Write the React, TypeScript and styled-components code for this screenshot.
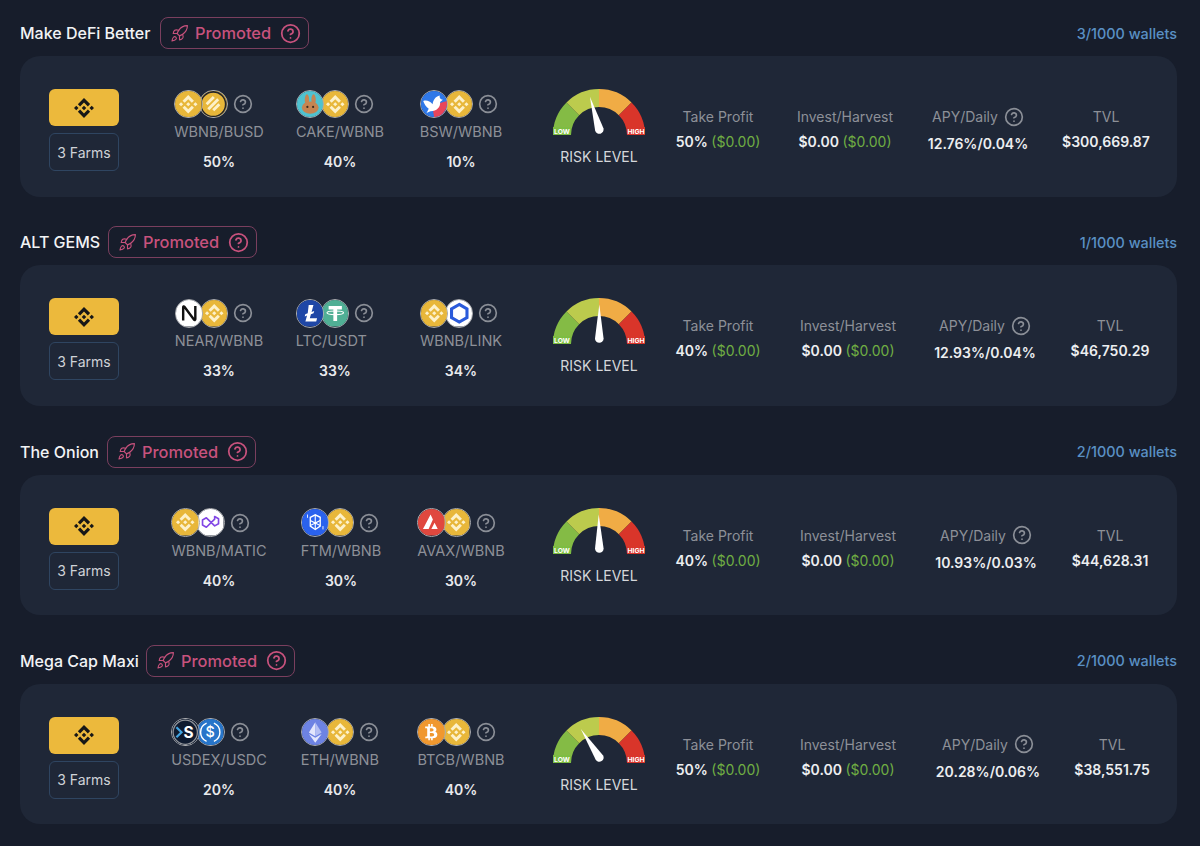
import React from 'react';
import styled, { createGlobalStyle } from 'styled-components';
import { CircleHelp, Rocket } from 'lucide-react';
import { SiBinance } from 'react-icons/si';
import { FaBtc } from 'react-icons/fa';

const GlobalStyle = createGlobalStyle`
  html, body {
    margin: 0;
    padding: 0;
    background: #171d2b;
  }
  body {
    font-family: 'Inter', 'Liberation Sans', sans-serif;
    color: #fff;
  }
`;

const Page = styled.div`
  width: 1200px;
  height: 846px;
  overflow: hidden;
  box-sizing: border-box;
  padding: 17px 23px 0 20px;
  display: flex;
  flex-direction: column;
  gap: 29.83px;
`;

const Group = styled.section`
  display: flex;
  flex-direction: column;
  gap: 7px;
`;

const GroupHeader = styled.header`
  display: flex;
  align-items: center;
  height: 32px;
`;

const GroupTitle = styled.h3<{ $width: number }>`
  width: ${(p) => p.$width}px;
  margin: 0 9px 0 0;
  font-size: 16px;
  font-weight: 500;
  white-space: nowrap;
  color: #f2f3f5;
`;

const PromotedBadge = styled.div`
  display: flex;
  align-items: center;
  box-sizing: border-box;
  height: 32px;
  width: 149px;
  padding-left: 9px;
  border: 1px solid #7a3f5e;
  border-radius: 8px;
  color: #c8527d;
  font-size: 16.4px;
  font-weight: 500;
  span {
    margin: 0 9px 0 6px;
  }
`;

const Wallets = styled.div`
  margin-left: auto;
  font-size: 14.4px;
  font-weight: 500;
  color: #5a90c4;
`;

const Card = styled.div`
  display: flex;
  align-items: flex-start;
  box-sizing: border-box;
  height: 140.5px;
  padding: 33px 0 0 29px;
  border-radius: 20px;
  background: #1f2737;
`;

const ChainColumn = styled.div`
  display: flex;
  flex-direction: column;
  gap: 7px;
  width: 70px;
  margin-right: 39.5px;
`;

const ChainButton = styled.div`
  display: flex;
  align-items: center;
  justify-content: center;
  height: 37px;
  border-radius: 6px;
  background: #ecb93c;
  color: #171717;
  font-size: 20px;
`;

const FarmsButton = styled.div`
  display: flex;
  align-items: center;
  justify-content: center;
  box-sizing: border-box;
  height: 38px;
  border: 1px solid #2f4561;
  border-radius: 6px;
  font-size: 14px;
  color: #cfd2d7;
`;

const Pairs = styled.div<{ $columns: string }>`
  display: grid;
  grid-template-columns: ${(p) => p.$columns};
  justify-items: center;
  width: 363px;
  margin-right: 31.5px;
`;

const Pair = styled.div`
  display: flex;
  flex-direction: column;
  width: fit-content;
`;

const CoinRow = styled.div`
  display: flex;
  align-items: center;
  height: 30px;
`;

const Coin = styled.div<{ $first?: boolean }>`
  position: relative;
  box-sizing: border-box;
  width: 28.5px;
  height: 28.5px;
  overflow: hidden;
  border: 1px solid #a9abaf;
  border-radius: 50%;
  margin-left: ${(p) => (p.$first ? 0 : '-3.5px')};
  z-index: ${(p) => (p.$first ? 2 : 1)};
  svg {
    display: block;
    width: 100%;
    height: 100%;
  }
`;

const HelpIcon = styled(CircleHelp)<{ $left?: number }>`
  flex: none;
  margin-left: ${(p) => p.$left ?? 5}px;
  color: #8b8f97;
`;

const PairName = styled.div`
  margin-top: 2px;
  font-size: 14.5px;
  line-height: 22px;
  white-space: nowrap;
  color: #8d9098;
`;

const PairShare = styled.div`
  margin-top: 8px;
  text-align: center;
  font-size: 14px;
  font-weight: 600;
  line-height: 22px;
  color: #e9eaec;
`;

const RiskColumn = styled.div`
  display: flex;
  flex-direction: column;
  align-items: center;
  width: 92px;
  svg {
    display: block;
  }
`;

const RiskLabel = styled.div`
  margin-top: 12px;
  font-size: 14px;
  line-height: 20px;
  white-space: nowrap;
  color: #d5d7db;
`;

const Stats = styled.div<{ $columns: string }>`
  display: grid;
  grid-template-columns: ${(p) => p.$columns};
  padding-top: 17px;
`;

const Stat = styled.div`
  display: flex;
  flex-direction: column;
  align-items: center;
  gap: 3px;
`;

const StatLabel = styled.div`
  display: flex;
  align-items: center;
  height: 21px;
  font-size: 14px;
  white-space: nowrap;
  color: #8d9098;
`;

const StatValue = styled.div<{ $drop?: boolean }>`
  margin-top: ${(p) => (p.$drop ? 3 : 1)}px;
  font-size: 14px;
  font-weight: 600;
  line-height: 22px;
  white-space: nowrap;
  color: #eceef0;
`;

const Gain = styled.span`
  font-weight: 400;
  color: #6fae43;
`;

const Art = ({ bg, children }: { bg: string; children?: React.ReactNode }) => (
  <svg viewBox="0 0 24 24">
    <rect width="24" height="24" fill={bg} />
    {children}
  </svg>
);

const bnbPath =
  'M16.624 13.92l2.717 2.716-7.353 7.353-7.353-7.352 2.717-2.717 4.636 4.66 4.636-4.66zm4.637-4.636L24 12l-2.715 2.716L18.568 12l2.693-2.716zm-9.272 0l2.716 2.692-2.716 2.717L9.272 12l2.717-2.715zm-9.273 0L5.409 12l-2.692 2.692L0 12l2.716-2.716zM11.989.012l7.353 7.329-2.718 2.715-4.635-4.635-4.636 4.66-2.717-2.716L11.989.012z';

const coins: Record<string, React.ReactNode> = {
  WBNB: (
    <Art bg="#e8b73a">
      <path transform="translate(3.6 3.6) scale(.7)" fill="#fdf1c9" d={bnbPath} />
    </Art>
  ),
  BUSD: (
    <Art bg="#e8b73a">
      <circle cx="12" cy="12" r="11.2" fill="none" stroke="#23252b" strokeWidth="1.4" />
      <path d="M6 12l6.5-6.5M7.5 16.5l9-9M12 17.5l5.5-5.5" stroke="#fdf1c9" strokeWidth="2.6" />
    </Art>
  ),
  CAKE: (
    <Art bg="#4fc2d0">
      <ellipse cx="9" cy="8" rx="2" ry="5" fill="#c58552" />
      <ellipse cx="15" cy="8" rx="2" ry="5" fill="#c58552" />
      <ellipse cx="12" cy="15" rx="7.6" ry="5.6" fill="#c58552" />
      <circle cx="9.4" cy="14.4" r="1" fill="#3a2a20" />
      <circle cx="14.6" cy="14.4" r="1" fill="#3a2a20" />
    </Art>
  ),
  BSW: (
    <Art bg="#2f78e8">
      <path d="M12 24C18 24 24 18 24 9L10 13z" fill="#e8455a" />
      <path d="M2 9c3-1 6 0 8.5 3C11 8 13 5 17 4c-.5 2 .3 3.5 2.8 4l-2.5 2c.5 5-3.5 8.5-8.8 8.3L5 20l2-4C4.7 14.5 3 12 2 9z" fill="#fff" />
    </Art>
  ),
  NEAR: (
    <Art bg="#ffffff">
      <path d="M6.5 18.5V6.500c0-.6.7-.9 1.1-.4l8.800 11.800c.4.5 1.1.2 1.1-.4V5.500" fill="none" stroke="#111" strokeWidth="2.2" />
    </Art>
  ),
  LTC: (
    <Art bg="#1f47a6">
      <path d="M10.6 4.5h4.3l-1.7 6.3 2.4-.9-.6 2.1-2.4.9-1 3.6h6.6l-.8 3H7.6l1.5-5.4-2.1.8.5-2 2.2-.8z" fill="#fff" />
    </Art>
  ),
  USDT: (
    <Art bg="#50af95">
      <path d="M6 5.5h12v3.2h-4.3V19h-3.4V8.700H6z" fill="#fff" />
      <ellipse cx="12" cy="11.6" rx="7.5" ry="1.7" fill="none" stroke="#fff" strokeWidth="1" />
    </Art>
  ),
  LINK: (
    <Art bg="#ffffff">
      <path d="M12 4l7 4v8l-7 4-7-4V8z" fill="none" stroke="#2a5ada" strokeWidth="2.8" />
    </Art>
  ),
  MATIC: (
    <Art bg="#ffffff">
      <path
        d="M16 9.2l-7.500 7.300-3.500-2v-4.500l3.500-2 7.500 7.300 3.500-2v-4.500l-3.500-2z"
        fill="none"
        stroke="#8247e5"
        strokeWidth="1.5"
        strokeLinejoin="round"
      />
    </Art>
  ),
  FTM: (
    <Art bg="#2a62ee">
      <path d="M7.5 7.5l4.500-2.200 4.500 2.200v8l-4.500 3-4.500-3z" fill="none" stroke="#fff" strokeWidth="1.2" />
      <path d="M7.5 10.5l4.500 2.200 4.500-2.200M12 5.500v12.500M7.500 15l4.500-2.300 4.500 2.300" fill="none" stroke="#fff" strokeWidth="1" />
      <path d="M5 5v3M19 15.5v3" stroke="#fff" strokeWidth=".8" />
    </Art>
  ),
  AVAX: (
    <Art bg="#e0483f">
      <path d="M11.4 5L4.500 18h5.100l3.900-8.500zM15 12.500l-2.900 5.500h5.800z" fill="#fff" />
    </Art>
  ),
  USDEX: (
    <Art bg="#0f1b30">
      <circle cx="12" cy="12" r="11" fill="none" stroke="#8f9298" strokeWidth="1.2" />
      <path d="M4 7.5l4.600 4.500L4 16.500" fill="none" stroke="#41a3e0" strokeWidth="2" />
      <text x="15" y="17" textAnchor="middle" fontSize="14" fontWeight="700" fill="#fff" fontFamily="Inter, sans-serif">
        S
      </text>
    </Art>
  ),
  USDC: (
    <Art bg="#2775ca">
      <path d="M8.7 3.8a8.900 8.900 0 000 16.400M15.300 3.800a8.900 8.900 0 010 16.400" fill="none" stroke="#fff" strokeWidth="1.3" />
      <text x="12" y="16.6" textAnchor="middle" fontSize="13" fontWeight="500" fill="#fff" fontFamily="Inter, sans-serif">
        $
      </text>
    </Art>
  ),
  ETH: (
    <Art bg="#6d83e3">
      <path d="M12 3l-5.800 9.300L12 15.700z" fill="#e3e7fc" />
      <path d="M12 3l5.800 9.300L12 15.700z" fill="#b5c0f4" />
      <path d="M6.2 13.6L12 21.500l5.800-7.900L12 17z" fill="#e3e7fc" />
    </Art>
  ),
  BTCB: (
    <Art bg="#f0982f">
      <g transform="translate(4.5 4.5) scale(.625)" color="#fff">
        <FaBtc size={24} />
      </g>
    </Art>
  ),
};

const Gauge = ({ angle }: { angle: number }) => (
  <svg width="92" height="46" viewBox="0 0 92 46">
    <path d="M0 46A46 46 0 0 1 13.47 13.47L26.2 26.2A28 28 0 0 0 18 46z" fill="#84bb45" />
    <path d="M13.47 13.47A46 46 0 0 1 46 0V18A28 28 0 0 0 26.2 26.2z" fill="#bccb4d" />
    <path d="M46 0A46 46 0 0 1 78.53 13.47L65.8 26.2A28 28 0 0 0 46 18z" fill="#f0ac45" />
    <path d="M78.53 13.47A46 46 0 0 1 92 46H74A28 28 0 0 0 65.8 26.2z" fill="#d9352a" />
    <rect x="0" y="38" width="18" height="8" fill="#7dbd42" />
    <rect x="74" y="38" width="18" height="8" fill="#d9352a" />
    <text x="9" y="44.7" textAnchor="middle" fontSize="6.8" fontWeight="700" fill="#fff" fontFamily="Inter, sans-serif">
      LOW
    </text>
    <text x="83" y="44.7" textAnchor="middle" fontSize="6.8" fontWeight="700" fill="#fff" fontFamily="Inter, sans-serif">
      HIGH
    </text>
    <path
      transform={`translate(46.3 40.5) rotate(${angle})`}
      d="M0 -34L-4.3 0A4.3 4.3 0 1 0 4.3 0Z"
      fill="#fff"
    />
  </svg>
);

type PairData = { a: string; b: string; share: string };

type Strategy = {
  title: string;
  titleWidth: number;
  wallets: string;
  pairColumns: string;
  statColumns: string;
  pairs: PairData[];
  angle: number;
  profit: string;
  apy: string;
  tvl: string;
};

const strategies: Strategy[] = [
  {
    title: 'Make DeFi Better',
    titleWidth: 131,
    wallets: '3/1000 wallets',
    pairColumns: '121px 121px 121px',
    statColumns: '146px 108px 158px 98px',
    pairs: [
      { a: 'WBNB', b: 'BUSD', share: '50%' },
      { a: 'CAKE', b: 'WBNB', share: '40%' },
      { a: 'BSW', b: 'WBNB', share: '10%' },
    ],
    angle: -16,
    profit: '50%',
    apy: '12.76%/0.04%',
    tvl: '$300,669.87',
  },
  {
    title: 'ALT GEMS',
    titleWidth: 79,
    wallets: '1/1000 wallets',
    pairColumns: '121px 111px 141px',
    statColumns: '146px 114px 160px 90px',
    pairs: [
      { a: 'NEAR', b: 'WBNB', share: '33%' },
      { a: 'LTC', b: 'USDT', share: '33%' },
      { a: 'WBNB', b: 'LINK', share: '34%' },
    ],
    angle: 0,
    profit: '40%',
    apy: '12.93%/0.04%',
    tvl: '$46,750.29',
  },
  {
    title: 'The Onion',
    titleWidth: 78,
    wallets: '2/1000 wallets',
    pairColumns: '121px 123px 117px',
    statColumns: '146px 114px 162px 86px',
    pairs: [
      { a: 'WBNB', b: 'MATIC', share: '40%' },
      { a: 'FTM', b: 'WBNB', share: '30%' },
      { a: 'AVAX', b: 'WBNB', share: '30%' },
    ],
    angle: -1,
    profit: '40%',
    apy: '10.93%/0.03%',
    tvl: '$44,628.31',
  },
  {
    title: 'Mega Cap Maxi',
    titleWidth: 117,
    wallets: '2/1000 wallets',
    pairColumns: '121px 121px 121px',
    statColumns: '146px 114px 166px 82px',
    pairs: [
      { a: 'USDEX', b: 'USDC', share: '20%' },
      { a: 'ETH', b: 'WBNB', share: '40%' },
      { a: 'BTCB', b: 'WBNB', share: '40%' },
    ],
    angle: -33,
    profit: '50%',
    apy: '20.28%/0.06%',
    tvl: '$38,551.75',
  },
];

const App = () => (
  <>
    <GlobalStyle />
    <Page>
      {strategies.map((item) => (
        <Group key={item.title}>
          <GroupHeader>
            <GroupTitle $width={item.titleWidth}>{item.title}</GroupTitle>
            <PromotedBadge>
              <Rocket size={19} strokeWidth={1.4} />
              <span>Promoted</span>
              <CircleHelp size={21} strokeWidth={2} />
            </PromotedBadge>
            <Wallets>{item.wallets}</Wallets>
          </GroupHeader>
          <Card>
            <ChainColumn>
              <ChainButton>
                <SiBinance />
              </ChainButton>
              <FarmsButton>3 Farms</FarmsButton>
            </ChainColumn>
            <Pairs $columns={item.pairColumns}>
              {item.pairs.map((pair) => (
                <Pair key={pair.a + pair.b}>
                  <CoinRow>
                    <Coin $first>{coins[pair.a]}</Coin>
                    <Coin>{coins[pair.b]}</Coin>
                    <HelpIcon size={20} />
                  </CoinRow>
                  <PairName>
                    {pair.a}/{pair.b}
                  </PairName>
                  <PairShare>{pair.share}</PairShare>
                </Pair>
              ))}
            </Pairs>
            <RiskColumn>
              <Gauge angle={item.angle} />
              <RiskLabel>RISK LEVEL</RiskLabel>
            </RiskColumn>
            <Stats $columns={item.statColumns}>
              <Stat>
                <StatLabel>Take Profit</StatLabel>
                <StatValue>
                  {item.profit} <Gain>($0.00)</Gain>
                </StatValue>
              </Stat>
              <Stat>
                <StatLabel>Invest/Harvest</StatLabel>
                <StatValue>
                  $0.00 <Gain>($0.00)</Gain>
                </StatValue>
              </Stat>
              <Stat>
                <StatLabel>
                  APY/Daily
                  <HelpIcon size={20} $left={6} />
                </StatLabel>
                <StatValue $drop>{item.apy}</StatValue>
              </Stat>
              <Stat>
                <StatLabel>TVL</StatLabel>
                <StatValue>{item.tvl}</StatValue>
              </Stat>
            </Stats>
          </Card>
        </Group>
      ))}
    </Page>
  </>
);

export default App;
